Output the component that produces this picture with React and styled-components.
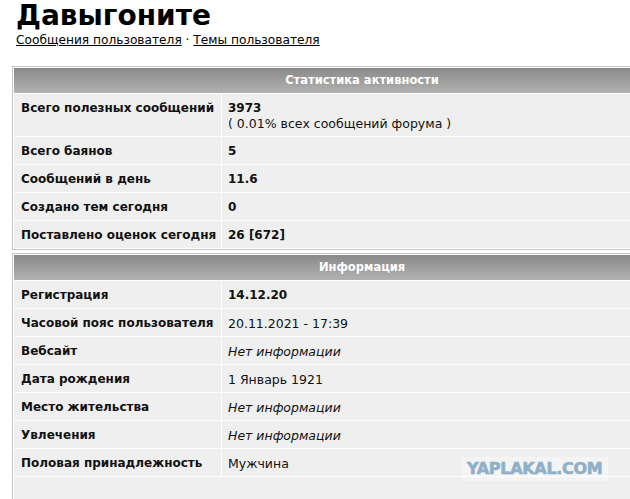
import React from "react";
import styled, { createGlobalStyle } from "styled-components";

const Global = createGlobalStyle`
  html, body { margin: 0; padding: 0; background: #fff; overflow: hidden; }
  body { font-family: "DejaVu Sans", Verdana, sans-serif; color: #000; }
`;

const Page = styled.div`
  position: relative;
  width: 630px;
  height: 499px;
  overflow: hidden;
`;

const Head = styled.div`
  padding: 0 0 0 16px;
`;

const Title = styled.h1`
  margin: 0;
  font-size: 28px;
  line-height: 32px;
  font-weight: bold;
`;

const Links = styled.div`
  font-size: 12.2px;
  line-height: 16px;
  color: #000;
`;

const Link = styled.a`
  color: #000;
  text-decoration: underline;
`;

const Stack = styled.div`
  display: flex;
  flex-direction: column;
  gap: 3px;
  margin: 18px 0 0 12px;
  width: 700px;
`;

const Table = styled.table`
  width: 100%;
  border: 1px solid #c6c6c6;
  border-collapse: separate;
  border-spacing: 1px;
  background: #fff;
  line-height: 15px;
  table-layout: fixed;
`;

const LabelCol = styled.col`
  width: 207px;
`;

const HeadCell = styled.th`
  height: 25px;
  padding: 0;
  background: linear-gradient(#898989, #b2b2b2);
  color: #fff;
  font-size: 11.5px;
  font-weight: bold;
  text-align: center;
  vertical-align: middle;
`;

const Cell = styled.td`
  background: #efefef;
  padding: 7px 6px 5px;
  vertical-align: top;
  white-space: nowrap;
  font-size: ${(p) => (p.$bold ? "12px" : "12.5px")};
  font-weight: ${(p) => (p.$bold ? "bold" : "normal")};
  font-style: ${(p) => (p.$italic ? "italic" : "normal")};
  color: #111;
`;

const Label = styled(Cell).attrs({ $bold: true })`
  padding-left: 7px;
  padding-right: 2px;
`;

const Note = styled.div`
  font-size: 12.5px;
  font-weight: normal;
`;

const Filler = styled.td`
  background: #efefef;
  height: 40px;
`;

const Mark = styled.div`
  position: absolute;
  left: 461px;
  top: 457px;
  padding: 3px 6px;
  background: rgba(255, 255, 255, 0.35);
  font-family: "DejaVu Sans", sans-serif;
  font-weight: bold;
  font-size: 16px;
  letter-spacing: -0.3px;
  line-height: 18px;
  color: #8fb0c8;
  -webkit-text-stroke: 0.6px #8fb0c8;
`;

const stats = [
  { k: "Всего полезных сообщений", v: "3973", sub: "( 0.01% всех сообщений форума )" },
  { k: "Всего баянов", v: "5" },
  { k: "Сообщений в день", v: "11.6" },
  { k: "Создано тем сегодня", v: "0" },
  { k: "Поставлено оценок сегодня", v: "26 [672]" },
];

const info = [
  { k: "Регистрация", v: "14.12.20", bold: true },
  { k: "Часовой пояс пользователя", v: "20.11.2021 - 17:39" },
  { k: "Вебсайт", v: "Нет информации", italic: true },
  { k: "Дата рождения", v: "1 Январь 1921" },
  { k: "Место жительства", v: "Нет информации", italic: true },
  { k: "Увлечения", v: "Нет информации", italic: true },
  { k: "Половая принадлежность", v: "Мужчина" },
];

const Cols = () => (
  <colgroup>
    <LabelCol />
    <col />
  </colgroup>
);

export default function App() {
  return (
    <Page>
      <Global />
      <Head>
        <Title>Давыгоните</Title>
        <Links>
          <Link href="#">Сообщения пользователя</Link> · <Link href="#">Темы пользователя</Link>
        </Links>
      </Head>
      <Stack>
        <Table>
          <Cols />
          <thead>
            <tr>
              <HeadCell colSpan={2}>Статистика активности</HeadCell>
            </tr>
          </thead>
          <tbody>
            {stats.map((r) => (
              <tr key={r.k}>
                <Label>{r.k}</Label>
                <Cell $bold>
                  {r.v}
                  {r.sub && <Note>{r.sub}</Note>}
                </Cell>
              </tr>
            ))}
          </tbody>
        </Table>
        <Table>
          <Cols />
          <thead>
            <tr>
              <HeadCell colSpan={2}>Информация</HeadCell>
            </tr>
          </thead>
          <tbody>
            {info.map((r) => (
              <tr key={r.k}>
                <Label>{r.k}</Label>
                <Cell $bold={r.bold} $italic={r.italic}>
                  {r.v}
                </Cell>
              </tr>
            ))}
            <tr>
              <Filler colSpan={2} />
            </tr>
          </tbody>
        </Table>
      </Stack>
      <Mark>YAPLAKAL.COM</Mark>
    </Page>
  );
}
